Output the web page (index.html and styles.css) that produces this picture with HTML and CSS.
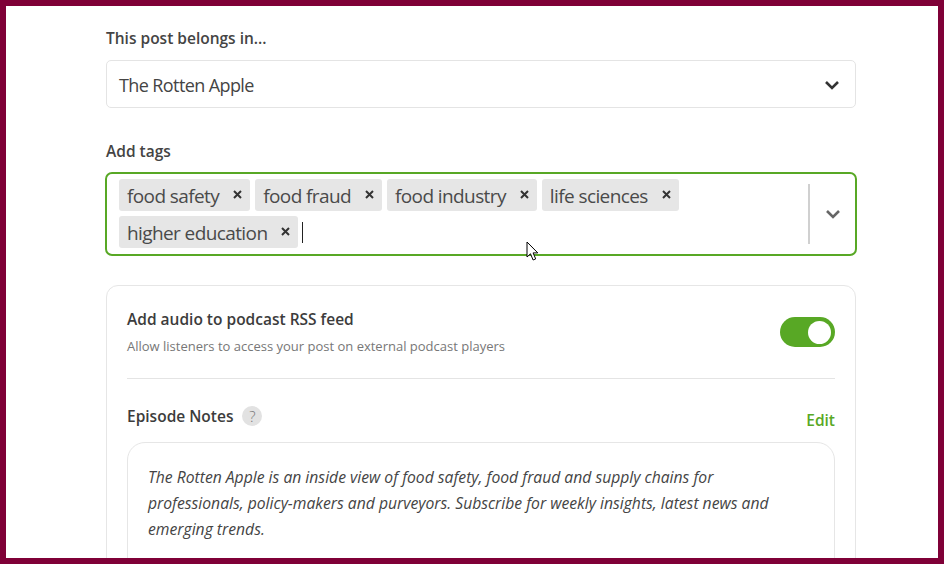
FILE: index.html
```html
<!DOCTYPE html>
<html lang="en">
<head>
<meta charset="utf-8">
<title>Post settings</title>
<link rel="stylesheet" href="styles.css">
</head>
<body>
<div class="frame">
  <main class="form">
    <label class="label first">This post belongs in...</label>
    <div class="select">
      <span class="select-value">The Rotten Apple</span>
      <svg class="chev" width="16" height="10" viewBox="0 0 16 10"><path d="M2 2l6 6 6-6" fill="none" stroke="#333" stroke-width="2.6"/></svg>
    </div>
    <label class="label tags-label">Add tags</label>
    <div class="tags">
      <div class="tag-list">
        <span class="tag">food safety<svg class="x" width="9" height="9" viewBox="0 0 9 9"><path d="M1 1l7 7M8 1l-7 7" stroke="#333" stroke-width="2"/></svg></span>
        <span class="tag">food fraud<svg class="x" width="9" height="9" viewBox="0 0 9 9"><path d="M1 1l7 7M8 1l-7 7" stroke="#333" stroke-width="2"/></svg></span>
        <span class="tag">food industry<svg class="x" width="9" height="9" viewBox="0 0 9 9"><path d="M1 1l7 7M8 1l-7 7" stroke="#333" stroke-width="2"/></svg></span>
        <span class="tag">life sciences<svg class="x" width="9" height="9" viewBox="0 0 9 9"><path d="M1 1l7 7M8 1l-7 7" stroke="#333" stroke-width="2"/></svg></span>
        <span class="tag">higher education<svg class="x" width="9" height="9" viewBox="0 0 9 9"><path d="M1 1l7 7M8 1l-7 7" stroke="#333" stroke-width="2"/></svg></span>
        <span class="caret"></span>
      </div>
      <div class="tag-sep"></div>
      <div class="tag-arrow">
        <svg width="16" height="10" viewBox="0 0 16 10"><path d="M2 2l6 6 6-6" fill="none" stroke="#666" stroke-width="2.6"/></svg>
      </div>
    </div>
    <section class="card">
      <div class="audio-row">
        <div>
          <div class="card-title">Add audio to podcast RSS feed</div>
          <div class="card-sub">Allow listeners to access your post on external podcast players</div>
        </div>
        <div class="toggle"><span class="knob"></span></div>
      </div>
      <hr class="rule">
      <div class="notes-head">
        <div class="notes-title"><span class="card-title">Episode Notes</span><span class="help">?</span></div>
        <a class="edit">Edit</a>
      </div>
      <div class="notes">The Rotten Apple is an inside view of food safety, food fraud and supply chains for professionals, policy-makers and purveyors. Subscribe for weekly insights, latest news and emerging trends.</div>
    </section>
  </main>
  <svg class="cursor" width="14" height="21" viewBox="0 0 14 21"><path d="M1 1v15l3.5-3.2 2.6 6.2 2.6-1.1-2.6-6h4.7z" fill="#fff" stroke="#000" stroke-width="1"/></svg>
</div>
</body>
</html>
```
FILE: styles.css
```css
* { box-sizing: border-box; }
html, body { margin: 0; padding: 0; }
body { font-family: "Open Sans", "Liberation Sans", sans-serif; color: #3c3c3c; background: #fff; }
.frame { position: relative; width: 944px; height: 564px; border: 6px solid #7f0037; overflow: hidden; background: #fff; }
.form { width: 750px; margin-left: 100px; }
.label { display: block; font-size: 15.5px; font-weight: 600; line-height: 20px; color: #444; }
.first { margin-top: 22px; }
.select { margin-top: 12px; height: 48px; border: 1px solid #e4e4e4; border-radius: 5px; display: flex; align-items: center; justify-content: space-between; padding: 1px 15px 0 12px; }
.select-value { font-size: 18px; color: #444; letter-spacing: -0.6px; }
.tags-label { margin-top: 33px; }
.tags { margin: 11px 0 0 -1px; width: 752px; height: 84px; border: 2px solid #58a825; border-radius: 7px; display: flex; align-items: center; }
.tag-list { flex: 1; display: flex; flex-wrap: wrap; align-items: center; gap: 5px; padding: 5px 0 0 12px; align-self: flex-start; }
.tag { display: inline-flex; align-items: center; height: 32px; background: #e6e6e6; border-radius: 3px; padding: 2px 8px 0; font-size: 19px; color: #4a4a4a; letter-spacing: -0.6px; white-space: nowrap; }
.x { margin: -4px 0 0 14px; }
.caret { width: 1px; height: 21px; background: #222; margin-left: -1px; }
.tag-sep { width: 2px; height: 60px; background: #d0d0d0; }
.tag-arrow { width: 45px; display: flex; justify-content: center; }
.card { margin-top: 29px; height: 320px; border: 1px solid #e6e6e6; border-radius: 12px; padding: 21px 20px 0; }
.audio-row { display: flex; justify-content: space-between; align-items: flex-start; height: 48px; }
.card-title { font-size: 15.5px; font-weight: 600; color: #3c3c3c; line-height: 24px; }
.card-sub { font-size: 13px; color: #777; line-height: 18px; margin-top: 6px; }
.toggle { width: 55px; height: 30px; margin-top: 10px; border-radius: 15px; background: #58a825; position: relative; }
.knob { position: absolute; right: 4px; top: 3.5px; width: 23px; height: 23px; border-radius: 50%; background: #fff; }
.rule { border: 0; border-top: 1px solid #e4e4e4; margin: 23px 0 0; }
.notes-head { display: flex; justify-content: space-between; align-items: flex-end; margin-top: 25px; height: 26px; }
.notes-title { display: flex; align-items: center; gap: 9px; align-self: flex-start; }
.help { width: 20px; height: 20px; border-radius: 50%; background: #e2e2e2; color: #777; font-size: 15px; font-weight: 300; display: flex; align-items: center; justify-content: center; }
.edit { font-size: 15.5px; font-weight: 600; color: #58a825; line-height: 20px; }
.notes { margin-top: 12px; width: 708px; height: 200px; border: 1px solid #e6e6e6; border-radius: 18px; padding: 21px 50px 21px 20px; font-size: 15.7px; font-style: italic; line-height: 26px; color: #444; }
.cursor { position: absolute; left: 520px; top: 235px; }
```
